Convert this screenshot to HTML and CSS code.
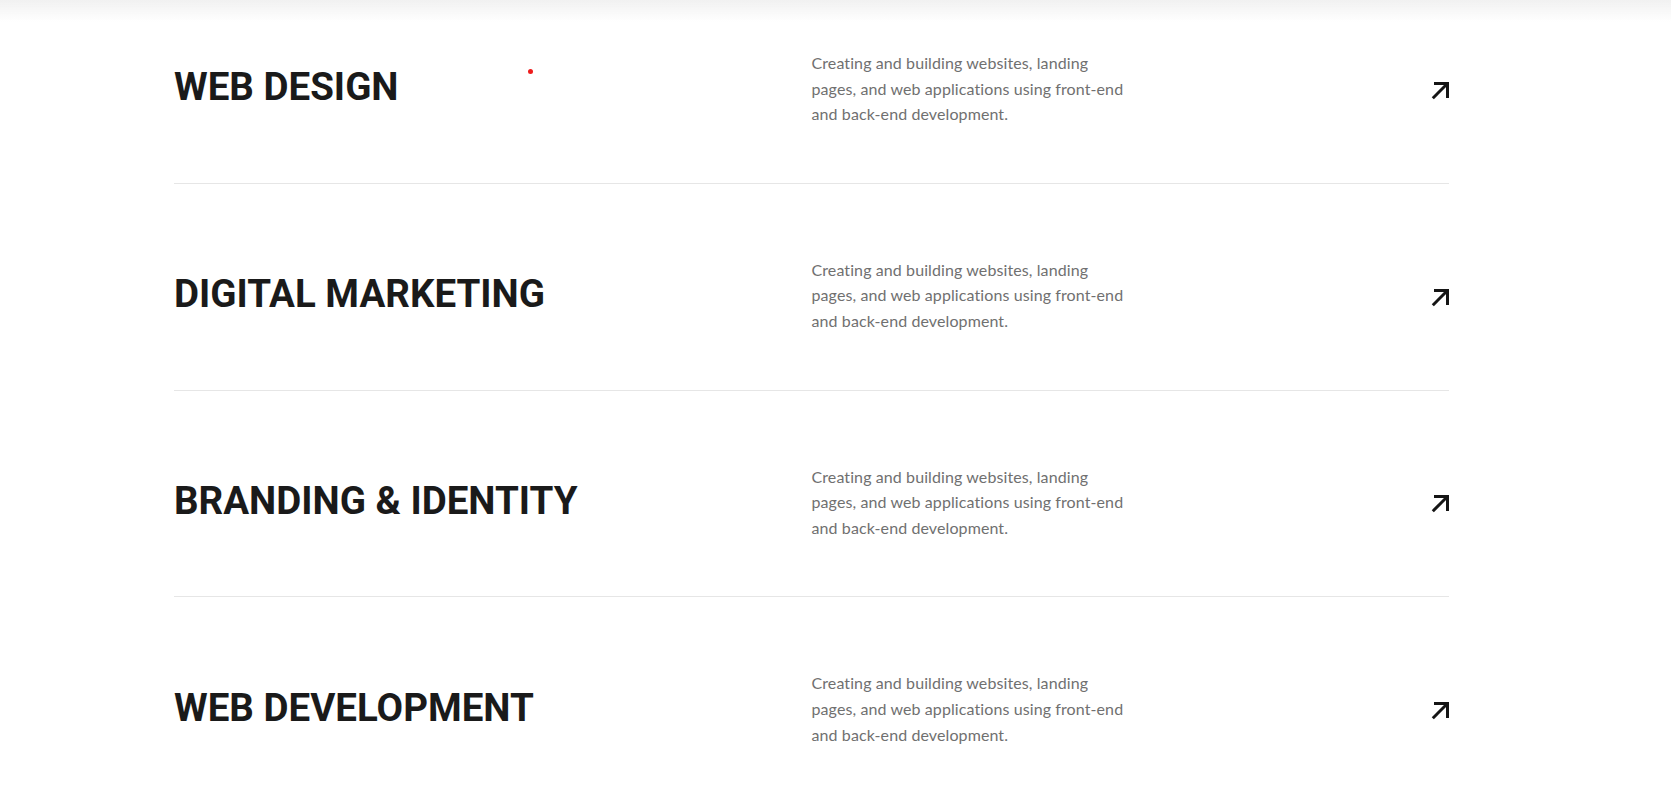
FILE: index.html
```html
<!DOCTYPE html>
<html lang="en">
<head>
<meta charset="utf-8">
<title>Services</title>
<link rel="stylesheet" href="styles.css">
</head>
<body>
<div class="top-shade"></div>
<span class="cursor-dot"></span>
<section class="services">
  <div class="service">
    <h2 class="service-title">WEB DESIGN</h2>
    <div class="service-side">
      <p class="service-desc">Creating and building websites, landing pages, and web applications using front-end and back-end development.</p>
      <a class="service-link" href="#" aria-label="Open">
        <svg viewBox="0 0 18 18" width="18" height="18"><path d="M3 1.5H16.5V16" /><path d="M1.8 16.2L15.5 2.5" /></svg>
      </a>
    </div>
  </div>
  <div class="service">
    <h2 class="service-title">DIGITAL MARKETING</h2>
    <div class="service-side">
      <p class="service-desc">Creating and building websites, landing pages, and web applications using front-end and back-end development.</p>
      <a class="service-link" href="#" aria-label="Open">
        <svg viewBox="0 0 18 18" width="18" height="18"><path d="M3 1.5H16.5V16" /><path d="M1.8 16.2L15.5 2.5" /></svg>
      </a>
    </div>
  </div>
  <div class="service">
    <h2 class="service-title">BRANDING &amp; IDENTITY</h2>
    <div class="service-side">
      <p class="service-desc">Creating and building websites, landing pages, and web applications using front-end and back-end development.</p>
      <a class="service-link" href="#" aria-label="Open">
        <svg viewBox="0 0 18 18" width="18" height="18"><path d="M3 1.5H16.5V16" /><path d="M1.8 16.2L15.5 2.5" /></svg>
      </a>
    </div>
  </div>
  <div class="service">
    <h2 class="service-title">WEB DEVELOPMENT</h2>
    <div class="service-side">
      <p class="service-desc">Creating and building websites, landing pages, and web applications using front-end and back-end development.</p>
      <a class="service-link" href="#" aria-label="Open">
        <svg viewBox="0 0 18 18" width="18" height="18"><path d="M3 1.5H16.5V16" /><path d="M1.8 16.2L15.5 2.5" /></svg>
      </a>
    </div>
  </div>
</section>
</body>
</html>
```

FILE: styles.css
```css
* { box-sizing: border-box; }

html, body {
  margin: 0;
  padding: 0;
  background: #ffffff;
  overflow: hidden;
}

body {
  font-family: "Lato", "Inter", sans-serif;
  color: #1a1a1a;
}

.top-shade {
  position: fixed;
  top: 0;
  left: 0;
  right: 0;
  height: 22px;
  background: linear-gradient(to bottom, #f1f1f1, rgba(255, 255, 255, 0));
  z-index: 2;
}

.cursor-dot {
  position: absolute;
  left: 528px;
  top: 69px;
  width: 5px;
  height: 5px;
  border-radius: 50%;
  background: #ee1c1c;
  z-index: 3;
}

.services {
  width: 1275px;
  margin: -23px 0 0 174px;
}

.service {
  display: grid;
  grid-template-columns: 1fr 1fr;
  align-items: center;
  padding: 73px 0 56px;
  border-bottom: 1px solid #e6e6e6;
}

.service-title {
  margin: 0 0 2px;
  font-family: "Roboto", "Lato", sans-serif;
  font-size: 38.5px;
  font-weight: 700;
  line-height: 46px;
  letter-spacing: 0;
  color: #1a1a1a;
}

.service-side {
  display: flex;
  align-items: center;
  justify-content: space-between;
}

.service-desc {
  margin: 0;
  max-width: 316px;
  font-size: 16px;
  line-height: 25.6px;
  letter-spacing: 0.1px;
  color: #707070;
}

.service-link {
  display: flex;
  color: #151515;
  margin-top: 5px;
}

.service-link svg {
  fill: none;
  stroke: currentColor;
  stroke-width: 3;
  stroke-linejoin: miter;
  stroke-linecap: butt;
}
```
